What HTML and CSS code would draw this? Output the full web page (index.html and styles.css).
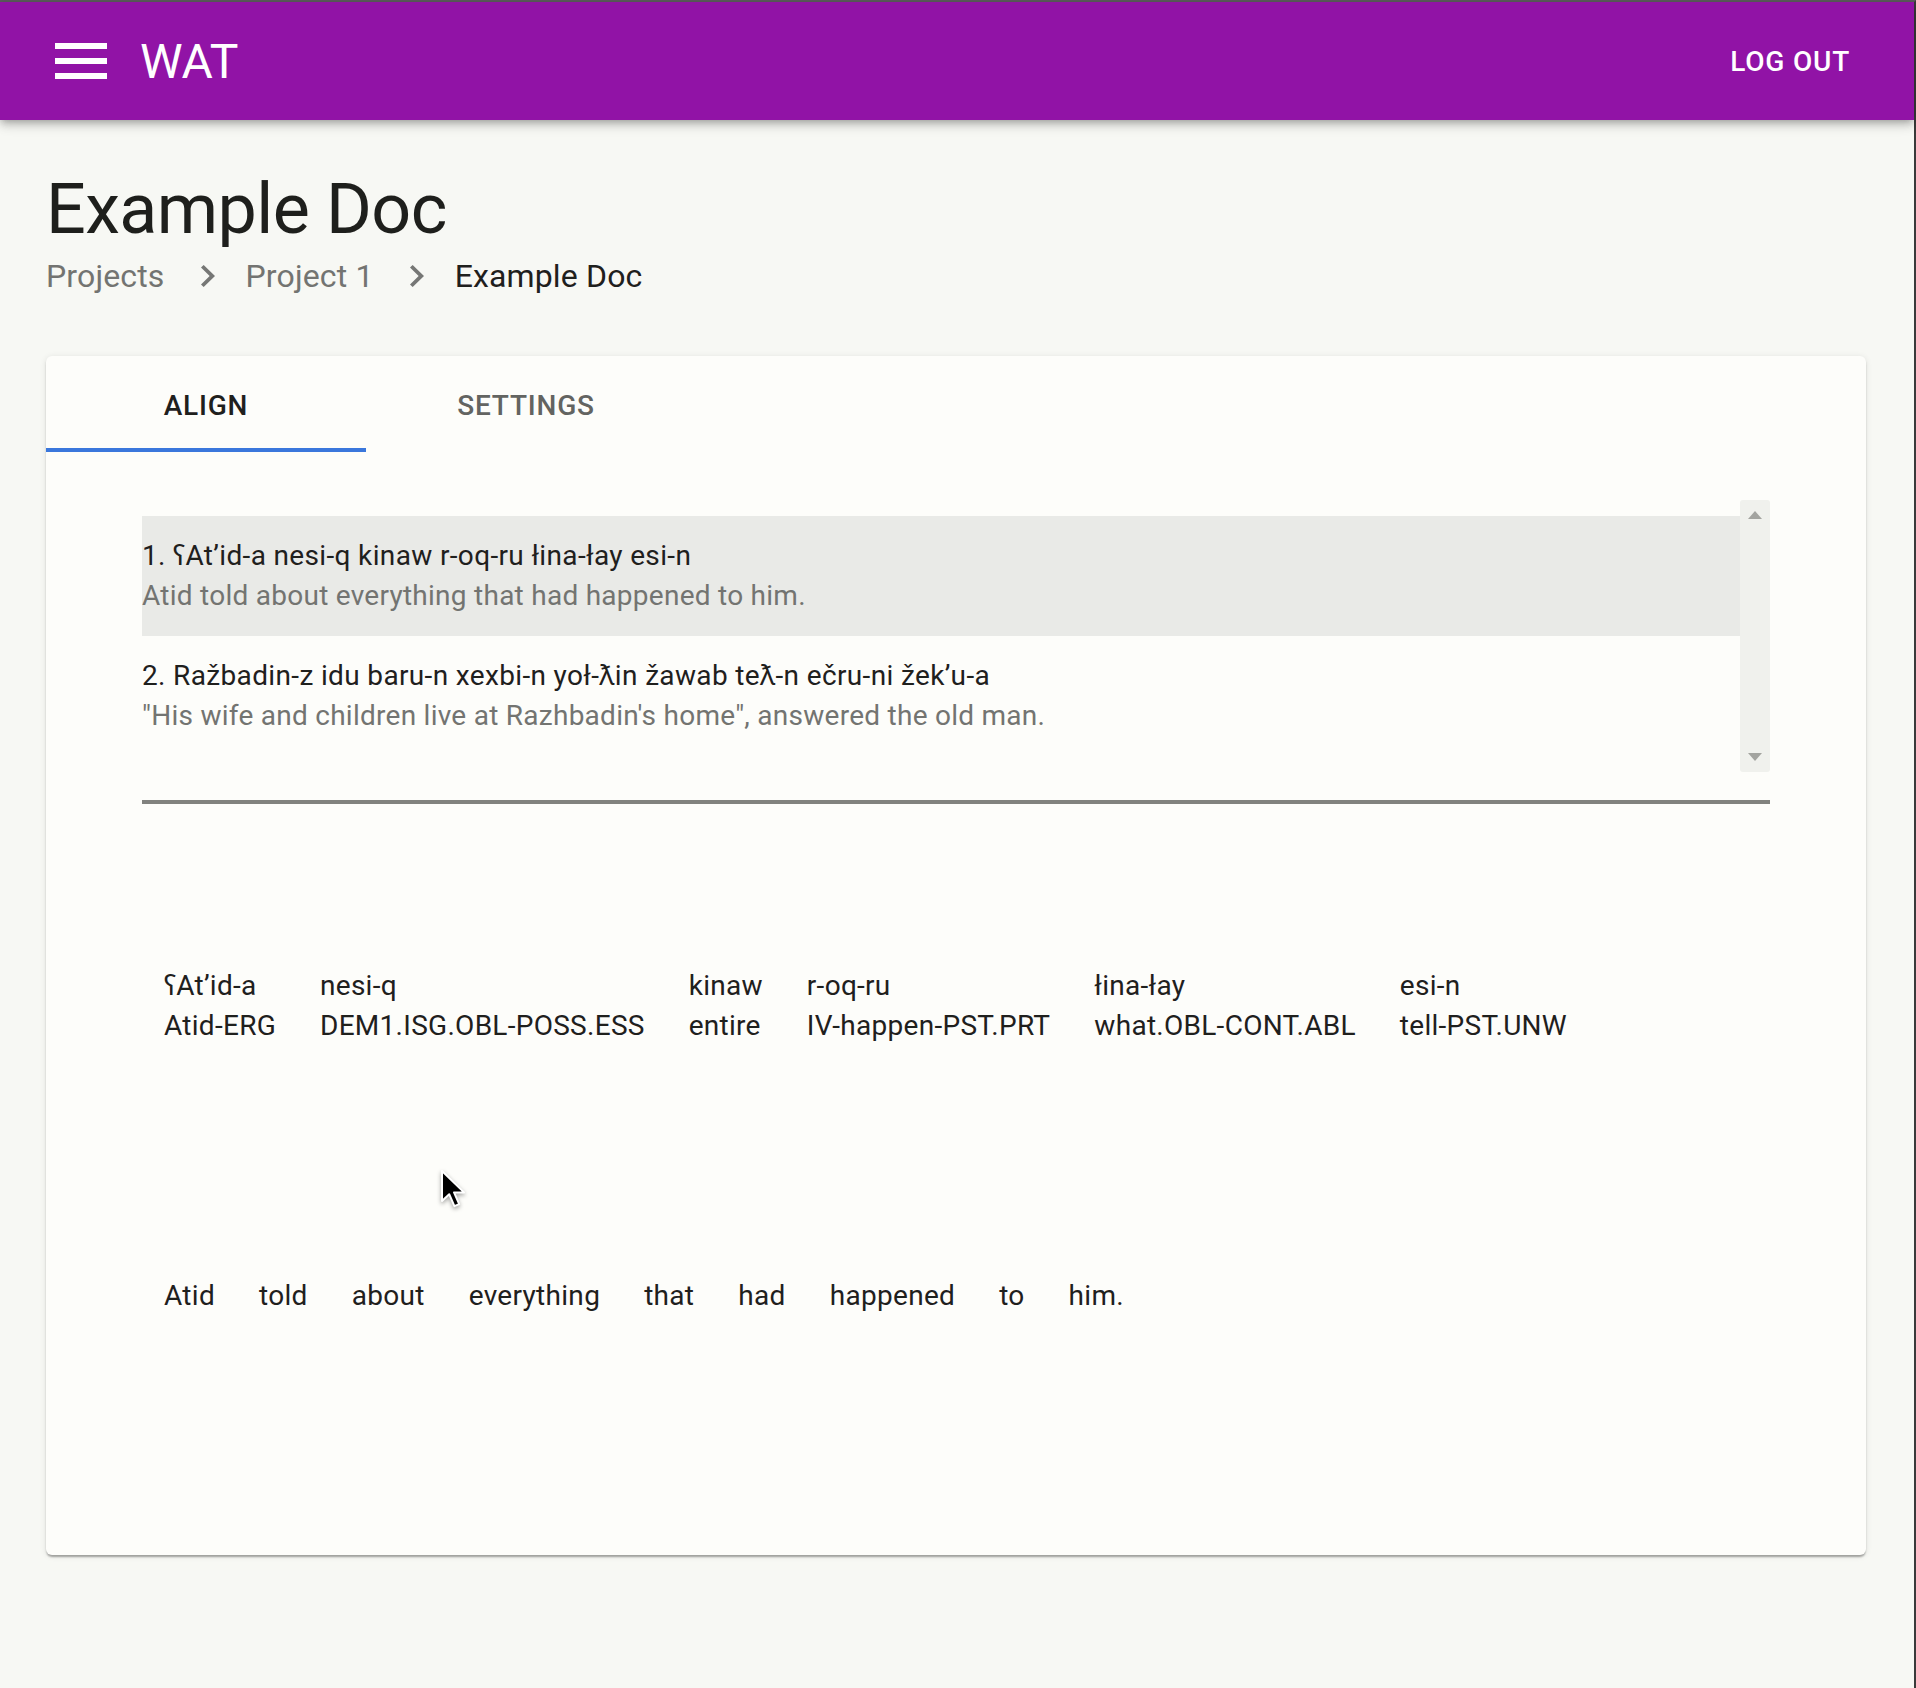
FILE: index.html
```html
<!DOCTYPE html>
<html lang="en">
<head>
<meta charset="utf-8">
<title>WAT</title>
<link rel="stylesheet" href="styles.css">
</head>
<body>
<div class="frame">
  <header class="appbar">
    <svg class="menu-icon" viewBox="0 0 52 36" width="52" height="36" aria-hidden="true">
      <rect x="0" y="0" width="52" height="6" fill="#fff"/>
      <rect x="0" y="15" width="52" height="6" fill="#fff"/>
      <rect x="0" y="30" width="52" height="6" fill="#fff"/>
    </svg>
    <div class="brand">WAT</div>
    <div class="spacer"></div>
    <div class="logout">LOG OUT</div>
  </header>

  <main class="main">
    <h1 class="title">Example Doc</h1>
    <nav class="crumbs">
      <span class="crumb">Projects</span>
      <svg class="chev" viewBox="8.59 6 7.41 12" width="14" height="22" preserveAspectRatio="none" aria-hidden="true"><path d="M10 6L8.59 7.41 13.17 12l-4.58 4.59L10 18l6-6z" fill="#767775"/></svg>
      <span class="crumb">Project 1</span>
      <svg class="chev" viewBox="8.59 6 7.41 12" width="14" height="22" preserveAspectRatio="none" aria-hidden="true"><path d="M10 6L8.59 7.41 13.17 12l-4.58 4.59L10 18l6-6z" fill="#767775"/></svg>
      <span class="crumb current">Example Doc</span>
    </nav>

    <section class="card">
      <div class="tabs">
        <div class="tab active">ALIGN</div>
        <div class="tab">SETTINGS</div>
      </div>

      <div class="card-body">
        <div class="listbox">
          <div class="list">
            <div class="row selected">
              <div class="primary">1. ʕAt’id-a nesi-q kinaw r-oq-ru łina-łay esi-n</div>
              <div class="secondary">Atid told about everything that had happened to him.</div>
            </div>
            <div class="row">
              <div class="primary">2. Ražbadin-z idu baru-n xexbi-n yoł-ƛin žawab teƛ-n ečru-ni žek’u-a</div>
              <div class="secondary">"His wife and children live at Razhbadin's home", answered the old man.</div>
            </div>
          </div>
          <div class="scrollbar">
            <span class="arrow up"></span>
            <span class="arrow down"></span>
          </div>
        </div>
        <div class="divider"></div>

        <div class="gloss">
          <div class="gcol"><div>ʕAt’id-a</div><div>Atid-ERG</div></div>
          <div class="gcol"><div>nesi-q</div><div>DEM1.ISG.OBL-POSS.ESS</div></div>
          <div class="gcol"><div>kinaw</div><div>entire</div></div>
          <div class="gcol"><div>r-oq-ru</div><div>IV-happen-PST.PRT</div></div>
          <div class="gcol"><div>łina-łay</div><div>what.OBL-CONT.ABL</div></div>
          <div class="gcol"><div>esi-n</div><div>tell-PST.UNW</div></div>
        </div>

        <div class="translation">
          <span class="tw">Atid</span>
          <span class="tw">told</span>
          <span class="tw">about</span>
          <span class="tw">everything</span>
          <span class="tw">that</span>
          <span class="tw">had</span>
          <span class="tw">happened</span>
          <span class="tw">to</span>
          <span class="tw">him.</span>
        </div>
      </div>
    </section>
  </main>

  <svg class="cursor" viewBox="0 0 13 21" width="26" height="42" aria-hidden="true">
    <path d="M1 1 L1 16 L4.6 12.6 L7.2 18.6 L9.6 17.6 L7 11.7 L12 11.7 Z" fill="#000" stroke="#fff" stroke-width="1" stroke-linejoin="round"/>
  </svg>
</div>
</body>
</html>
```

FILE: styles.css
```css
html, body {
  margin: 0;
  padding: 0;
}

body {
  background: #f7f8f4;
  font-family: Roboto, "Noto Sans", "DejaVu Sans", sans-serif;
  color: #1f1f1e;
}

.frame {
  position: relative;
  min-height: 1686px;
  border-top: 2px solid #5c5c5c;
  border-right: 2px solid #3a3a3a;
}

.appbar {
  height: 118px;
  background: #9113a6;
  color: #fff;
  display: flex;
  align-items: center;
  box-shadow: 0 3px 7px -2px rgba(0,0,0,.25), 0 6px 9px 0 rgba(0,0,0,.12), 0 2px 16px 0 rgba(0,0,0,.10);
  position: relative;
  z-index: 1;
}

.menu-icon {
  margin-left: 55px;
  display: block;
}

.brand {
  margin-left: 33px;
  font-size: 48px;
  font-weight: 400;
  letter-spacing: 0;
}

.spacer { flex: 1; }

.logout {
  font-size: 28px;
  font-weight: 500;
  letter-spacing: 0.8px;
  margin-right: 64px;
}

.main {
  padding: 0 48px 0 46px;
}

.title {
  margin: 47px 0 0 0;
  font-size: 70px;
  line-height: 84px;
  font-weight: 400;
  letter-spacing: -0.6px;
  color: #1e1f1c;
}

.crumbs {
  display: flex;
  align-items: center;
  height: 48px;
  padding-top: 1px;
  font-size: 32px;
  line-height: 48px;
  letter-spacing: 0.15px;
}

.crumb {
  color: #737471;
}

.crumb.current {
  color: #1f201d;
}

.chev {
  display: block;
  margin: 0 31px 0 36px;
}

.card {
  margin-top: 56px;
  height: 1199px;
  background: #fdfdfa;
  border-radius: 6px;
  box-shadow: 0 3px 2px -1px rgba(0,0,0,.22), 0 2px 2px 0 rgba(0,0,0,.12), 0 1px 6px 0 rgba(0,0,0,.10);
  box-sizing: border-box;
  overflow: hidden;
}

.tabs {
  display: flex;
  height: 96px;
}

.tab {
  width: 320px;
  display: flex;
  align-items: center;
  justify-content: center;
  font-size: 28px;
  font-weight: 500;
  letter-spacing: 0.8px;
  color: #636461;
  box-sizing: border-box;
  padding-top: 3px;
}

.tab.active {
  color: #1f201d;
  border-bottom: 4px solid #3a77dc;
  padding-top: 6px;
}

.card-body {
  padding: 48px 96px 0 96px;
}

.listbox {
  display: flex;
  height: 272px;
}

.list {
  flex: 1;
  overflow: hidden;
  padding-top: 16px;
}

.row {
  height: 120px;
  box-sizing: border-box;
  padding: 20px 0;
  font-size: 28px;
  line-height: 40px;
}

.row.selected {
  background: #e9eae7;
}

.primary {
  color: #1f201d;
  white-space: nowrap;
  letter-spacing: 0.35px;
}

.secondary {
  color: #737471;
  white-space: nowrap;
  letter-spacing: 0.26px;
}

.scrollbar {
  width: 30px;
  background: #f0f1ed;
  border-radius: 3px;
  display: flex;
  flex-direction: column;
  justify-content: space-between;
  align-items: center;
  padding: 11px 0 11px 0;
  box-sizing: border-box;
}

.arrow {
  width: 0;
  height: 0;
  border-left: 7px solid transparent;
  border-right: 7px solid transparent;
}

.arrow.up {
  border-bottom: 8px solid #a3a4a0;
}

.arrow.down {
  border-top: 8px solid #a3a4a0;
}

.divider {
  margin-top: 28px;
  height: 4px;
  background: #81827e;
}

.gloss {
  display: flex;
  margin-top: 162px;
  font-size: 28px;
  line-height: 40px;
  letter-spacing: 0.28px;
  color: #1f201d;
}

.gcol {
  padding: 0 22px;
  white-space: nowrap;
}

.translation {
  display: flex;
  margin-top: 230px;
  font-size: 28px;
  line-height: 40px;
  letter-spacing: 0.3px;
  color: #1f201d;
}

.tw {
  padding: 0 22px;
  white-space: nowrap;
}

.cursor {
  position: absolute;
  left: 440px;
  top: 1167px;
  filter: drop-shadow(0 2px 2px rgba(0,0,0,.35));
}
```
